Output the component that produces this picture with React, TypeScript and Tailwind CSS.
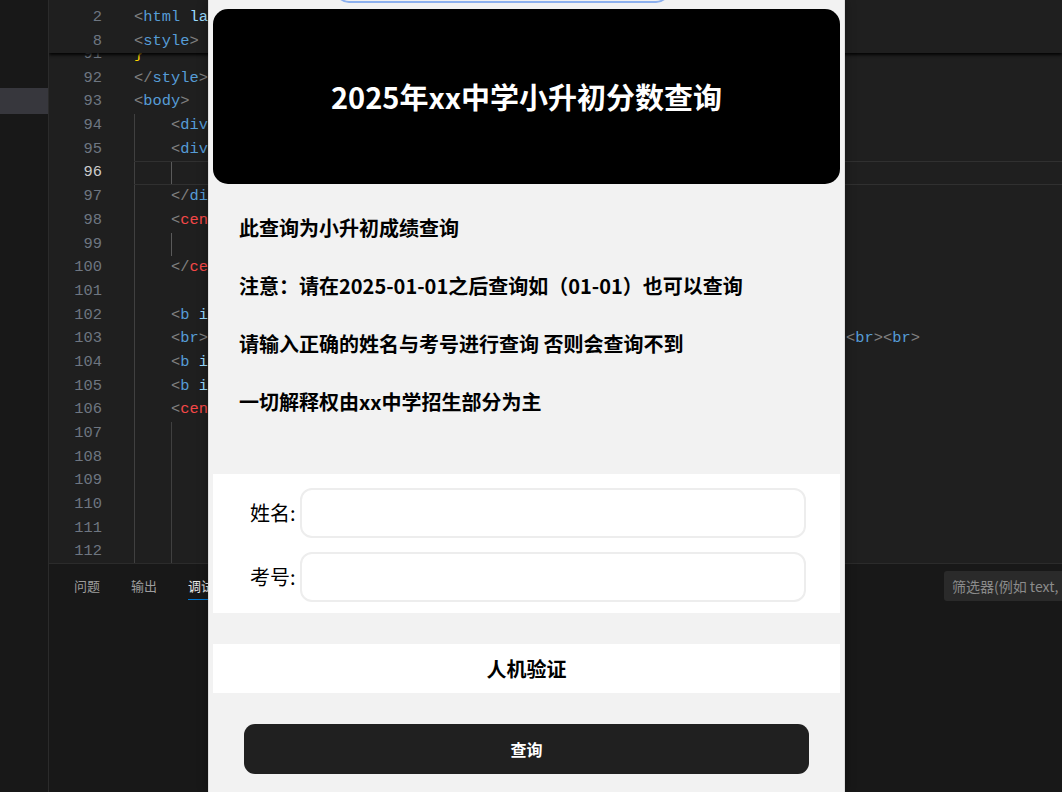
import React from 'react';

const C = {
  p: 'text-[#808080]',
  t: 'text-[#569cd6]',
  a: 'text-[#9cdcfe]',
  r: 'text-[#f44747]',
  y: 'text-[#ffd700]',
};

type Tok = [string, keyof typeof C];
type Line = { n: number; g: number; toks: Tok[]; cur?: boolean; tail?: Tok[] };

const open = (name: string, red = false): Tok[] => [['<', 'p'], [name, red ? 'r' : 't'], ['>', 'p']];
const close = (name: string, red = false): Tok[] => [['</', 'p'], [name, red ? 'r' : 't'], ['>', 'p']];
const attr = (name: string, a: string): Tok[] => [['<', 'p'], [name, 't'], [' ' + a, 'a']];

const lines: Line[] = [
  { n: 91, g: 0, toks: [['}', 'y']] },
  { n: 92, g: 0, toks: close('style') },
  { n: 93, g: 0, toks: open('body') },
  { n: 94, g: 1, toks: attr('div', 'class') },
  { n: 95, g: 1, toks: attr('div', 'class') },
  { n: 96, g: 2, toks: [], cur: true },
  { n: 97, g: 1, toks: close('div') },
  { n: 98, g: 1, toks: open('center', true) },
  { n: 99, g: 2, toks: [] },
  { n: 100, g: 1, toks: close('center', true) },
  { n: 101, g: 1, toks: [] },
  { n: 102, g: 1, toks: attr('b', 'id') },
  { n: 103, g: 1, toks: open('br'), tail: [...open('br'), ...open('br')] },
  { n: 104, g: 1, toks: attr('b', 'id') },
  { n: 105, g: 1, toks: attr('b', 'id') },
  { n: 106, g: 1, toks: open('center', true) },
  { n: 107, g: 2, toks: [] },
  { n: 108, g: 2, toks: [] },
  { n: 109, g: 2, toks: [] },
  { n: 110, g: 2, toks: [] },
  { n: 111, g: 2, toks: [] },
  { n: 112, g: 2, toks: [] },
];

function Toks({ toks }: { toks: Tok[] }) {
  return (
    <>
      {toks.map(([s, c], i) => (
        <span key={i} className={C[c]}>
          {s}
        </span>
      ))}
    </>
  );
}

function CodeRow({ line }: { line: Line }) {
  return (
    <div className="flex h-[23.7px] leading-[23.7px]">
      <div className={`w-[53px] shrink-0 text-right ${line.cur ? 'text-[#cccccc]' : 'text-[#6e7681]'}`}>{line.n}</div>
      <div className={`ml-[32px] flex flex-1 whitespace-pre ${line.cur ? 'border-y border-[#303030]' : ''}`}>
        {Array.from({ length: line.g }).map((_, i) => (
          <span
            key={i}
            className={`h-full w-[37px] shrink-0 border-l ${i === 1 && line.toks.length === 0 && line.n < 100 ? 'border-[#5a5a5a]' : 'border-[#404040]'}`}
          />
        ))}
        <Toks toks={line.toks} />
        {line.tail && (
          <>
            <span className="inline-block w-[638px]" />
            <Toks toks={line.tail} />
          </>
        )}
      </div>
    </div>
  );
}

function Editor() {
  return (
    <div className="relative h-[563px] overflow-hidden font-['Liberation_Mono',monospace] text-[15.4px]">
      {/* sticky scroll header */}
      <div className="absolute inset-x-0 top-0 z-10 h-[53px] bg-[#1f1f1f] pt-[6px] shadow-[0_2px_3px_rgba(0,0,0,0.9)]">
        <CodeRow line={{ n: 2, g: 0, toks: [['<', 'p'], ['html', 't'], [' lang', 'a']] }} />
        <CodeRow line={{ n: 8, g: 0, toks: open('style') }} />
      </div>
      <div className="pt-[43px]">
        {lines.map((l) => (
          <CodeRow key={l.n} line={l} />
        ))}
      </div>
    </div>
  );
}

function BottomPanel() {
  return (
    <div className="flex h-[229px] items-start border-t border-[#2b2b2b] bg-[#181818] font-['Noto_Sans_CJK_SC',sans-serif] text-[13px]">
      <div className="flex flex-1 gap-[31px] pl-[25px] pt-[13px] text-[#9d9d9d]">
        <span className="pb-[4px] leading-[18px]">问题</span>
        <span className="pb-[4px] leading-[18px]">输出</span>
        <span className="border-b border-[#0078d4] pb-[4px] leading-[18px] text-[#e7e7e7]">调试控制台</span>
      </div>
      <div className="mt-[7px] -mr-[122px] h-[30px] w-[240px] shrink-0 rounded-[3px] bg-[#2a2a2a] px-[8px] text-[14px] leading-[30px] whitespace-nowrap text-[#8b8b8b]">
        筛选器(例如 text, !exclude, \escape)
      </div>
    </div>
  );
}

function QueryPage() {
  return (
    <div className="absolute left-[208px] top-0 z-20 flex h-[792px] w-[637px] flex-col overflow-hidden border-x border-[#dedede] bg-[#f2f2f2] px-[4px] font-['Noto_Sans_CJK_SC',sans-serif] text-black shadow-[0_0_10px_rgba(0,0,0,0.35)]">
      <div className="-mt-[34px] ml-[122px] h-[37px] w-[335px] shrink-0 rounded-[14px] border-2 border-[#8cb0ee]" />
      <div className="mt-[6px] flex h-[175px] shrink-0 items-center justify-center rounded-[15px] bg-black">
        <h1 className="text-[29px] font-bold text-white">2025年xx中学小升初分数查询</h1>
      </div>

      <div className="flex flex-col gap-[28px] pl-[26px] pt-[29px] text-[20px] font-bold leading-[30px]">
        <p>此查询为小升初成绩查询</p>
        <p>注意：请在2025-01-01之后查询如（01-01）也可以查询</p>
        <p>请输入正确的姓名与考号进行查询 否则会查询不到</p>
        <p>一切解释权由xx中学招生部分为主</p>
      </div>

      <div className="mt-[57px] flex h-[139px] shrink-0 flex-col gap-[14px] bg-white pt-[14px] text-[20px]">
        <div className="flex items-center pl-[37px]">
          <label className="w-[50px]">姓名:</label>
          <input className="h-[50px] w-[506px] rounded-[12px] border-2 border-[#ededed] bg-white outline-none" />
        </div>
        <div className="flex items-center pl-[37px]">
          <label className="w-[50px]">考号:</label>
          <input className="h-[50px] w-[506px] rounded-[12px] border-2 border-[#ededed] bg-white outline-none" />
        </div>
      </div>

      <div className="mt-[31px] flex h-[49px] shrink-0 items-center justify-center bg-white text-[20px] font-bold">人机验证</div>

      <button className="mx-[31px] mt-[31px] h-[50px] shrink-0 rounded-[11px] bg-[#202020] text-[16px] font-bold text-white">
        查询
      </button>
    </div>
  );
}

export default function App() {
  return (
    <div className="relative flex h-[792px] w-[1062px] overflow-hidden bg-[#1f1f1f]">
      <aside className="h-full w-[49px] shrink-0 border-r border-[#2b2b2b] bg-[#181818]">
        <div className="mt-[88px] h-[26px] bg-[#37373d]" />
      </aside>
      <main className="flex flex-1 flex-col">
        <Editor />
        <BottomPanel />
      </main>
      <QueryPage />
    </div>
  );
}
